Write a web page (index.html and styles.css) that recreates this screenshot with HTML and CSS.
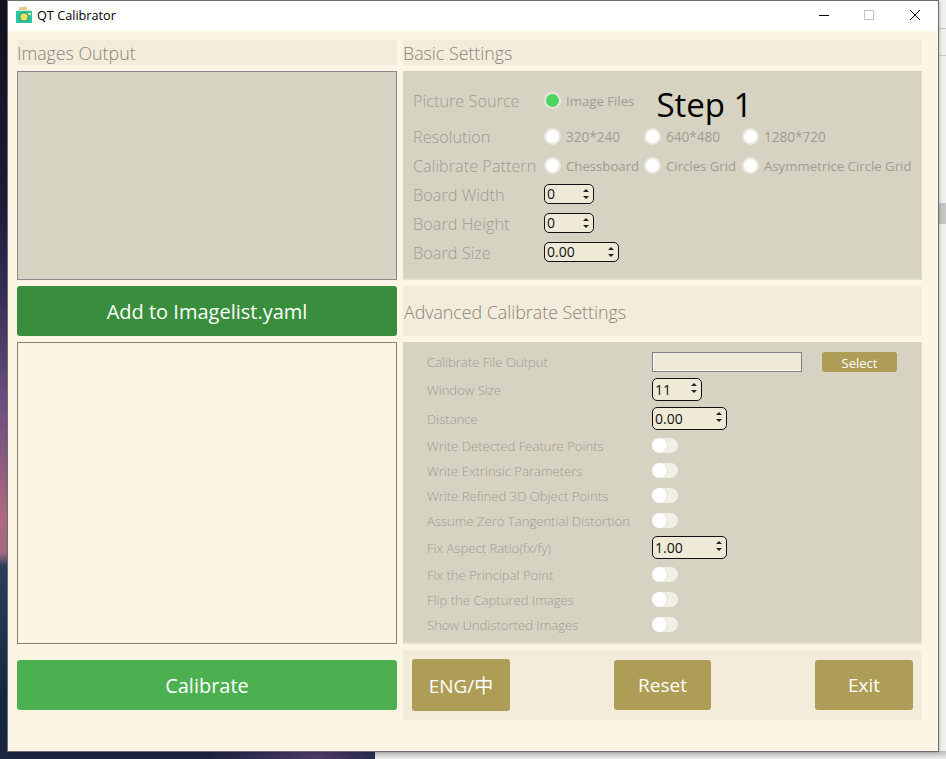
FILE: index.html
```html
<!DOCTYPE html>
<html lang="en">
<head>
<meta charset="utf-8">
<title>QT Calibrator</title>
<link rel="stylesheet" href="styles.css">
</head>
<body>
<div class="desktop">
  <div class="wallpaper"></div>
  <div class="behind">
    <i class="bg-line l1"></i>
    <i class="bg-line l2"></i>
    <i class="bg-scroll"></i>
    <i class="bg-shade"></i>
  </div>
</div>
<main class="window">
  <header class="titlebar">
    <svg class="app-icon" viewBox="0 0 16 16" width="16" height="16">
      <rect x="0" y="4" width="16" height="12" fill="#2fc4a0"/>
      <rect x="3" y="0" width="8" height="4" fill="#e9c98a"/>
      <rect x="1" y="3" width="14" height="1" fill="#d8e8c0"/>
      <rect x="11" y="6" width="4" height="2" fill="#f6e58a"/>
      <circle cx="8" cy="10" r="5" fill="#1fa98a"/>
      <circle cx="8" cy="10" r="3.6" fill="#f5e05c"/>
    </svg>
    <span class="title">QT Calibrator</span>
    <div class="win-controls">
      <svg class="win-btn" viewBox="0 0 12 12" width="12" height="12"><path d="M2 6.5H12" stroke="#000" fill="none"/></svg>
      <svg class="win-btn" viewBox="0 0 12 12" width="12" height="12"><rect x="1.5" y="1.5" width="9" height="9" stroke="#c4c4c4" fill="none"/></svg>
      <svg class="win-btn" viewBox="0 0 12 12" width="12" height="12"><path d="M1 1L11 11M11 1L1 11" stroke="#000" fill="none"/></svg>
    </div>
  </header>
  <div class="content">
    <section class="left">
      <h2 class="heading">Images Output</h2>
      <div class="image-view"></div>
      <button class="big-btn dark">Add to Imagelist.yaml</button>
      <div class="list-view"></div>
      <button class="big-btn light">Calibrate</button>
    </section>
    <section class="right">
      <h2 class="heading">Basic Settings</h2>
      <div class="basic">
        <div class="label-col">
          <span>Picture Source</span>
          <span>Resolution</span>
          <span>Calibrate Pattern</span>
          <span>Board Width</span>
          <span>Board Height</span>
          <span>Board Size</span>
        </div>
        <div class="opts">
          <div class="row r-src">
            <label class="radio on"><i></i>Image Files</label>
            <span class="step">Step 1</span>
          </div>
          <div class="row">
            <label class="radio w100 big"><i></i>320*240</label>
            <label class="radio w98 big"><i></i>640*480</label>
            <label class="radio big"><i></i>1280*720</label>
          </div>
          <div class="row">
            <label class="radio w100"><i></i>Chessboard</label>
            <label class="radio w98"><i></i>Circles Grid</label>
            <label class="radio"><i></i>Asymmetrice Circle Grid</label>
          </div>
          <div class="row r-spin"><div class="spin s50">0<b></b></div></div>
          <div class="row r-spin"><div class="spin s50">0<b></b></div></div>
          <div class="row r-spin"><div class="spin s75">0.00<b></b></div></div>
        </div>
      </div>
      <h2 class="heading tall">Advanced Calibrate Settings</h2>
      <div class="advanced">
        <div class="a-row h-file"><span>Calibrate File Output</span><div class="file"></div><button class="select">Select</button></div>
        <div class="a-row h-win"><span>Window Size</span><div class="spin s50">11<b></b></div></div>
        <div class="a-row h-dist"><span>Distance</span><div class="spin s75">0.00<b></b></div></div>
        <div class="a-row h-sw"><span>Write Detected Feature Points</span><i class="switch"></i></div>
        <div class="a-row h-sw"><span>Write Extrinsic Parameters</span><i class="switch"></i></div>
        <div class="a-row h-sw"><span>Write Refined 3D Object Points</span><i class="switch"></i></div>
        <div class="a-row h-sw"><span>Assume Zero Tangential Distortion</span><i class="switch"></i></div>
        <div class="a-row h-fix"><span>Fix Aspect Ratio(fx/fy)</span><div class="spin s75">1.00<b></b></div></div>
        <div class="a-row h-sw"><span>Fix the Principal Point</span><i class="switch"></i></div>
        <div class="a-row h-sw"><span>Flip the Captured Images</span><i class="switch"></i></div>
        <div class="a-row h-sw"><span>Show Undistorted Images</span><i class="switch"></i></div>
      </div>
      <div class="actions">
        <button class="act lang">ENG/中</button>
        <button class="act reset">Reset</button>
        <button class="act exit">Exit</button>
      </div>
    </section>
  </div>
</main>
</body>
</html>
```
FILE: styles.css
```css
* { box-sizing: border-box; }
html, body { margin: 0; height: 100%; overflow: hidden; }
body {
  position: relative;
  width: 946px;
  height: 759px;
  background: #e9e9e9;
  font-family: "Open Sans", "Noto Sans", "Noto Sans CJK SC", sans-serif;
}
.desktop { position: absolute; inset: 0; display: flex; }
.wallpaper {
  width: 375px;
  background:
    linear-gradient(90deg, rgba(30,40,70,0) 55%, rgba(95,65,115,.75) 85%, rgba(50,50,90,.6) 100%) 0 100% / 100% 9px no-repeat,
    linear-gradient(180deg, #0f1220 0, #1a1b36 200px, #3a2f5a 300px, #6a4d80 400px, #b06a80 520px, #a06a80 553px, #2a3f5c 566px, #12283f 700px, #1c2440 759px);
}
.behind { position: relative; flex: 1; background: #f0f0f0; }
.bg-line { position: absolute; right: 0; width: 8px; height: 1px; background: #c9c9c9; }
.l1 { top: 28px; }
.l2 { top: 55px; }
.bg-scroll { position: absolute; right: 0; top: 203px; width: 8px; height: 21px; background: #c6c6c6; }
.bg-shade { position: absolute; left: 0; right: 0; top: 751px; height: 8px; background: linear-gradient(180deg, #bdbdbd, #ececec); }
.window {
  position: absolute;
  left: 8px;
  top: 1px;
  width: 930px;
  height: 750px;
  background: #fdf5e3;
  box-shadow: 0 0 0 1px #6e6e6e, 1px 1px 4px rgba(0,0,0,.3);
  display: flex;
  flex-direction: column;
}
.titlebar {
  height: 30px;
  flex: none;
  background: #fff;
  display: flex;
  align-items: center;
  padding: 0 0 2px 8px;
  gap: 5px;
}
.app-icon { flex: none; }
.title { font-size: 12.7px; color: #000; }
.win-controls { margin-left: auto; display: flex; gap: 34px; padding-right: 17px; }
.win-btn { display: block; overflow: visible; }
.content {
  flex: 1;
  display: flex;
  gap: 6px;
  padding: 9px 16px 0 9px;
}
.left { width: 380px; display: flex; flex-direction: column; }
.right { width: 519px; display: flex; flex-direction: column; }
.heading {
  margin: 0;
  height: 25px;
  background: #f3ecda;
  color: #8a857c;
  font-weight: 300;
  font-size: 17.8px;
  line-height: 27px;
  flex: none;
}
.left .heading { margin-bottom: 6px; }
.image-view { height: 209px; background: #d6d3c2; border: 1px solid #8a8a8a; flex: none; }
.big-btn { border: 0; border-radius: 3px; color: #fff; font: 20px "Open Sans", sans-serif; height: 50px; flex: none; padding: 0; }
.dark { background: #388e3c; margin-top: 6px; }
.light { background: #4caf50; margin-top: 16px; }
.list-view { height: 302px; margin-top: 6px; border: 1px solid #85807a; flex: none; }
.basic {
  margin-top: 6px;
  height: 209px;
  background: #d6d3c2;
  border-bottom: 2px solid #e3e0d3;
  border-right: 1px solid #e3e0d3;
  display: flex;
  padding: 0 0 0 10px;
  flex: none;
}
.label-col { width: 131px; display: flex; flex-direction: column; padding-top: 16px; color: #a09c93; font-size: 16.3px; font-weight: 300; }
.label-col span { height: 29px; line-height: 29px; white-space: nowrap; }
.label-col span:nth-child(1) { height: 36px; }
.opts { flex: 1; display: flex; flex-direction: column; padding-top: 15px; }
.row { display: flex; align-items: center; height: 29px; }
.r-src { margin-bottom: 7px; }
.r-spin { align-items: flex-start; padding-top: 4px; }
.radio { display: flex; align-items: center; gap: 5px; font-size: 13.2px; color: #a09c93; white-space: nowrap; }
.radio.big { font-size: 13.6px; }
.radio i { width: 17px; height: 17px; border-radius: 50%; background: #fff; border: 2px solid #e9e7df; flex: none; }
.radio.on i { background: #4ed55f; }
.w100 { width: 100px; }
.w98 { width: 98px; }
.step { margin-left: 22px; font-size: 33px; color: #000; line-height: 36px; align-self: flex-start; margin-top: 1px; }
.spin {
  position: relative;
  height: 20px;
  border: 1px solid #111;
  border-radius: 5px;
  background: #efe9d8;
  font-size: 14px;
  line-height: 18px;
  padding-left: 2px;
  color: #111;
  flex: none;
}
.spin b { position: absolute; right: 3px; top: 3px; width: 8px; height: 12px; }
.spin b::before, .spin b::after { content: ""; position: absolute; left: 1px; border: 3px solid transparent; }
.spin b::before { top: -2px; border-bottom-color: #222; }
.spin b::after { bottom: -2px; border-top-color: #222; }
.s50 { width: 50px; }
.s75 { width: 75px; }
.heading.tall { margin-top: 6px; height: 50px; line-height: 52px; padding-left: 1px; }
.advanced {
  margin-top: 6px;
  height: 302px;
  background: #d6d3c2;
  border-bottom: 2px solid #e3e0d3;
  border-right: 1px solid #e3e0d3;
  padding: 7px 0 0 24px;
  display: flex;
  flex-direction: column;
  flex: none;
}
.a-row { display: flex; align-items: center; color: #a09c93; font-size: 13.1px; font-weight: 300; flex: none; }
.a-row > span { width: 225px; white-space: nowrap; }
.h-file { height: 26px; }
.h-win { height: 29px; }
.h-dist { height: 29px; }
.h-sw { height: 25px; }
.h-fix { height: 29px; }
.a-row .spin { height: 23px; line-height: 21px; font-weight: 400; }
.file { width: 150px; height: 20px; background: #efe9d8; border: 1px solid #808080; box-shadow: inset 1px 0 0 #fff, inset 0 -1px 0 #fff; }
.select { margin-left: 20px; width: 75px; height: 20px; background: #ae9d56; color: #fff; border: 0; border-radius: 3px; font: 13px/22px "Open Sans", sans-serif; padding: 0; }
.switch { position: relative; width: 26px; height: 15px; border-radius: 8px; background: #f1efe6; display: block; }
.switch::before { content: ""; position: absolute; left: 0; top: 0; width: 15px; height: 15px; border-radius: 50%; background: #fff; box-shadow: 1px 0 1px rgba(0,0,0,.08); }
.actions {
  margin-top: 6px;
  height: 70px;
  background: #f3ecda;
  display: flex;
  justify-content: space-between;
  align-items: center;
  padding: 0 9px;
  flex: none;
}
.act { height: 50px; border: 0; border-radius: 3px; background: #ae9d56; color: #fff; font: 19px "Open Sans", "Noto Sans CJK SC", sans-serif; padding: 0; }
.reset { width: 97px; }
.exit { width: 98px; }
.lang { width: 98px; height: 52px; }
```
